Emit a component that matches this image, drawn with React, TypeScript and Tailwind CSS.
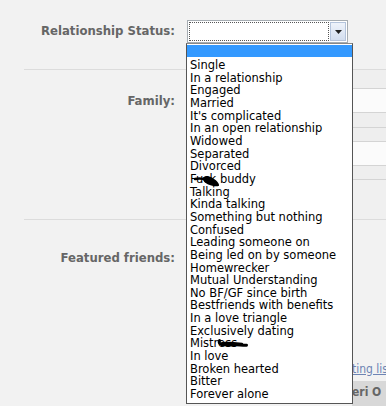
import React from 'react'

const options = [
  'Single',
  'In a relationship',
  'Engaged',
  'Married',
  "It's complicated",
  'In an open relationship',
  'Widowed',
  'Separated',
  'Divorced',
  'Fuck buddy',
  'Talking',
  'Kinda talking',
  'Something but nothing',
  'Confused',
  'Leading someone on',
  'Being led on by someone',
  'Homewrecker',
  'Mutual Understanding',
  'No BF/GF since birth',
  'Bestfriends with benefits',
  'In a love triangle',
  'Exclusively dating',
  'Mistress',
  'In love',
  'Broken hearted',
  'Bitter',
  'Forever alone',
]

const font = { fontFamily: '"DejaVu Sans Condensed", "DejaVu Sans", sans-serif' }

function Label({ children }: { children: React.ReactNode }) {
  return (
    <div className="w-[175px] shrink-0 text-right text-[13px] font-bold text-[#666666] leading-[16px]">
      {children}
    </div>
  )
}

// black marker scribbles that censor two of the options
function Scribble({ kind }: { kind: 'a' | 'b' }) {
  if (kind === 'a') {
    return (
      <svg className="absolute left-0 top-0 overflow-visible" width="60" height="14" viewBox="0 0 60 14">
        <path d="M5 6 C9 5 13 5.5 17 7" stroke="#000" strokeWidth="2.6" fill="none" strokeLinecap="round" />
        <path d="M13 4.5 C15.5 2.5 20 3 23.5 5.5 C27 8 29.5 10.5 29 12.8 C26.5 14 21.5 13 19 11.8 C15.5 10.3 12.5 8 13 4.5 Z" fill="#000" />
      </svg>
    )
  }
  return (
    <svg className="absolute left-0 top-0 overflow-visible" width="60" height="14" viewBox="0 0 60 14">
      <path
        d="M29.5 3.5 C28.5 5 29.5 7 31.5 7.5 C37 8.5 44 7.5 50 8 C53 8.2 55 8.3 56.5 8.2"
        stroke="#000"
        strokeWidth="3"
        fill="none"
        strokeLinecap="round"
      />
      <path d="M32 6.3 C38 5.8 44 6.2 52 7" stroke="#000" strokeWidth="2.6" fill="none" strokeLinecap="round" />
    </svg>
  )
}

export default function App() {
  return (
    <div className="relative w-[386px] h-[406px] overflow-hidden bg-[#f2f2f2]" style={font}>
      {/* relationship row */}
      <div className="flex h-[69px] pt-[20px]">
        <Label>
          <div className="pt-[3px]">Relationship Status:</div>
        </Label>
        <div className="ml-[12px] w-[161px] h-[23px] border border-[#a5acb2] bg-white flex p-[1px]">
          <div className="flex-1 border border-dotted border-[#555]" />
          <div className="w-[16px] ml-[1px] bg-gradient-to-b from-[#eef3fb] to-[#d3deef] border border-[#b4c4dc] flex items-center justify-center">
            <svg width="7" height="4" viewBox="0 0 7 4">
              <path d="M0 0h7L3.5 4z" fill="#222" />
            </svg>
          </div>
        </div>
      </div>
      <div className="ml-[24px] h-px bg-[#dcdcdc]" />

      {/* family row */}
      <div className="flex h-[149px]">
        <Label>
          <div className="pt-[23px]">Family:</div>
        </Label>
        <div className="ml-auto w-[34px] flex flex-col">
          <div className="h-[18px] bg-[#efefef]" />
          <div className="h-px bg-[#d4d4d4]" />
          <div className="h-[23px] bg-[#fbfbfb]" />
          <div className="h-px bg-[#d4d4d4]" />
          <div className="h-[14px] bg-[#eeeeee]" />
          <div className="h-px bg-[#d4d4d4]" />
          <div className="h-[13px] bg-[#eeeeee]" />
          <div className="h-px bg-[#d4d4d4]" />
          <div className="h-[23px] bg-[#fbfbfb]" />
          <div className="h-px bg-[#d4d4d4]" />
          <div className="h-[13px] bg-[#eeeeee]" />
          <div className="h-px bg-[#d4d4d4]" />
          <div className="flex-1 bg-[#f0f0f0]" />
        </div>
      </div>
      <div className="ml-[24px] h-px bg-[#dcdcdc]" />

      {/* featured friends row */}
      <div className="flex h-[187px]">
        <Label>
          <div className="pt-[30px]">Featured friends:</div>
        </Label>
        <div className="ml-auto w-[34px] flex flex-col justify-end">
          <div className="text-[12px] leading-[14px] text-[#6d84b4] underline whitespace-nowrap">
            ting lis
          </div>
          <div className="h-[26px] mt-[5px] bg-[#d8d8d8] text-[12px] font-bold text-[#666] leading-[22px] whitespace-nowrap">
            eri O
          </div>
        </div>
      </div>

      {/* open dropdown list */}
      <div
        className="absolute left-[186px] top-[43px] w-[167px] h-[361px] bg-white border border-[#555] border-t-[#888] text-[11.5px] leading-[12.65px] text-black"
        style={{ fontFamily: '"DejaVu Sans", sans-serif' }}
      >
        <div className="h-[12px] mt-[1px] bg-[#3399ff]" />
        <div className="pt-[2px] pl-[3px]">
          {options.map((o) => (
            <div key={o} className="relative whitespace-nowrap">
              {o}
              {o === 'Fuck buddy' && <Scribble kind="a" />}
              {o === 'Mistress' && <Scribble kind="b" />}
            </div>
          ))}
        </div>
      </div>
    </div>
  )
}
